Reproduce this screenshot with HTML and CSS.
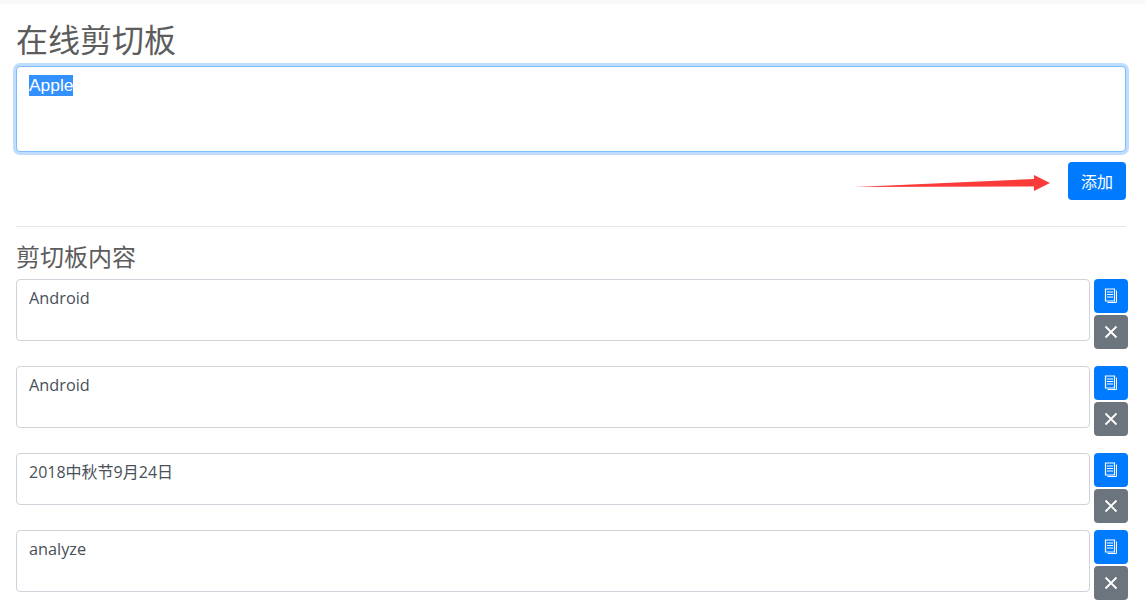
FILE: index.html
```html
<!DOCTYPE html>
<html lang="zh">
<head>
<meta charset="utf-8">
<title>在线剪切板</title>
<link rel="stylesheet" href="styles.css">
</head>
<body>
<div class="topbar"></div>
<main class="page">
  <h1 class="title">在线剪切板</h1>
  <div class="field field-focus"><span class="selected">Apple</span></div>
  <div class="add-row">
    <svg class="arrow" width="200" height="24" viewBox="0 0 200 24"><path d="M0 16 L179 8 L179 4 L195 12 L179 20 L179 15.5 Z" fill="#fb3a3a"/></svg>
    <button class="btn btn-add">添加</button>
  </div>
  <hr class="rule">
  <h2 class="subtitle">剪切板内容</h2>

  <section class="item">
    <div class="field field-item field-latin">Android</div>
    <div class="actions">
      <button class="btn btn-icon btn-blue"><svg width="14" height="16" viewBox="0 0 14 16"><path d="M1.5 1h9v12h-9z M3 4h6 M3 6.5h6 M3 9h6" fill="none" stroke="#fff" stroke-width="1.2"/><path d="M12.5 2.5v12h-9" fill="none" stroke="#fff"/></svg></button>
      <button class="btn btn-icon btn-grey"><svg width="14" height="14" viewBox="0 0 14 14"><path d="M1.5 1.5l11 11M12.5 1.5l-11 11" stroke="#fff" stroke-width="1.8" fill="none"/></svg></button>
    </div>
  </section>
  <section class="item">
    <div class="field field-item field-latin">Android</div>
    <div class="actions">
      <button class="btn btn-icon btn-blue"><svg width="14" height="16" viewBox="0 0 14 16"><path d="M1.5 1h9v12h-9z M3 4h6 M3 6.5h6 M3 9h6" fill="none" stroke="#fff" stroke-width="1.2"/><path d="M12.5 2.5v12h-9" fill="none" stroke="#fff"/></svg></button>
      <button class="btn btn-icon btn-grey"><svg width="14" height="14" viewBox="0 0 14 14"><path d="M1.5 1.5l11 11M12.5 1.5l-11 11" stroke="#fff" stroke-width="1.8" fill="none"/></svg></button>
    </div>
  </section>
  <section class="item item-short">
    <div class="field field-item field-short">2018中秋节9月24日</div>
    <div class="actions">
      <button class="btn btn-icon btn-blue"><svg width="14" height="16" viewBox="0 0 14 16"><path d="M1.5 1h9v12h-9z M3 4h6 M3 6.5h6 M3 9h6" fill="none" stroke="#fff" stroke-width="1.2"/><path d="M12.5 2.5v12h-9" fill="none" stroke="#fff"/></svg></button>
      <button class="btn btn-icon btn-grey"><svg width="14" height="14" viewBox="0 0 14 14"><path d="M1.5 1.5l11 11M12.5 1.5l-11 11" stroke="#fff" stroke-width="1.8" fill="none"/></svg></button>
    </div>
  </section>
  <section class="item">
    <div class="field field-item field-latin">analyze</div>
    <div class="actions">
      <button class="btn btn-icon btn-blue"><svg width="14" height="16" viewBox="0 0 14 16"><path d="M1.5 1h9v12h-9z M3 4h6 M3 6.5h6 M3 9h6" fill="none" stroke="#fff" stroke-width="1.2"/><path d="M12.5 2.5v12h-9" fill="none" stroke="#fff"/></svg></button>
      <button class="btn btn-icon btn-grey"><svg width="14" height="14" viewBox="0 0 14 14"><path d="M1.5 1.5l11 11M12.5 1.5l-11 11" stroke="#fff" stroke-width="1.8" fill="none"/></svg></button>
    </div>
  </section>
</main>
</body>
</html>
```
FILE: styles.css
```css
* { box-sizing: border-box; }
html, body { margin: 0; padding: 0; background: #fff; }
body {
  font-family: "Open Sans", "Noto Sans CJK SC", sans-serif;
  font-size: 16px;
  color: #495057;
  overflow: hidden;
  height: 609px;
}
.topbar { height: 4px; background: #f8f9fa; }
.page { padding: 17px 17px 0 16px; }
.title {
  margin: 0 0 5px;
  font-family: "Liberation Sans", "Noto Sans CJK SC", sans-serif;
  font-size: 32px;
  line-height: 40px;
  font-weight: 400;
  color: #5c5c5c;
}
.subtitle {
  margin: 0 0 5px;
  font-family: "Liberation Sans", "Noto Sans CJK SC", sans-serif;
  font-size: 24px;
  line-height: 32px;
  font-weight: 400;
  color: #5c5c5c;
}
.field {
  background: #fff;
  border: 1px solid #ced4da;
  border-radius: 4px;
  padding: 6px 12px;
  line-height: 24px;
}
.field-focus {
  width: 1110px;
  height: 86px;
  margin-right: 2px;
  border-color: #80bdff;
  box-shadow: 0 0 0 3px rgba(0, 123, 255, .25);
  font-family: "Liberation Sans", sans-serif;
  font-size: 17.4px;
}
.selected { display: inline-block; height: 21px; line-height: 21px; margin-top: 2px; background: #3390ff; color: #fff; vertical-align: top; }
.add-row {
  position: relative;
  display: flex;
  justify-content: flex-end;
  width: 1110px;
  margin-top: 10px;
}
.arrow { position: absolute; left: 839px; top: 9px; }
.rule { width: 1110px; margin: 26px 0 15px; border: 0; border-top: 1px solid #e6e6e6; }
.btn {
  display: flex;
  align-items: center;
  justify-content: center;
  border: 0;
  border-radius: 4px;
  color: #fff;
  padding: 0;
  font-family: "Noto Sans CJK SC", sans-serif;
  font-size: 16px;
}
.btn-add { width: 58px; height: 38px; background: #007bff; }
.btn-icon { width: 34px; height: 34px; }
.btn-blue { background: #007bff; }
.btn-grey { background: #6c757d; }
.item { display: flex; gap: 4px; height: 87px; align-items: flex-start; }
.item-short { height: 77px; }
.field-item { flex: 1; height: 62px; }
.field-latin { font-size: 16.3px; }
.field-short { height: 52px; }
.actions { display: flex; flex-direction: column; gap: 2px; }
```
